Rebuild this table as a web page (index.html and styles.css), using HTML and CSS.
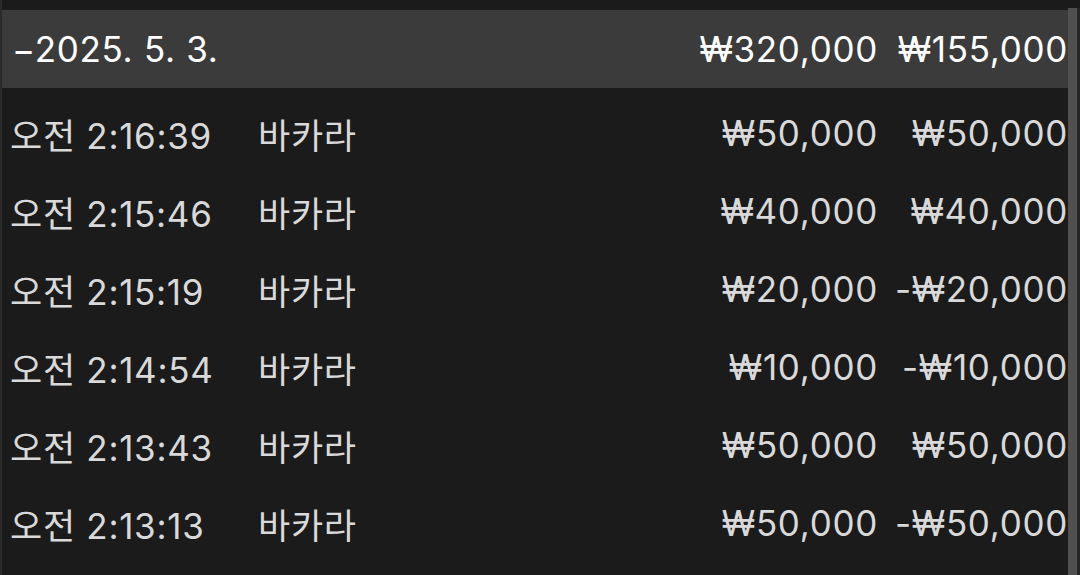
FILE: index.html
```html
<!DOCTYPE html>
<html lang="ko">
<head>
    <meta charset="UTF-8">
    <meta name="viewport" content="width=device-width, initial-scale=1.0">
    <title>게임 기록</title>
    <link rel="stylesheet" href="styles.css">
</head>
<body>
    <div class="screen">
        <section class="list">
            <div class="row dayRow">
                <span class="date">&minus;2025. 5. 3.</span>
                <span class="amount">₩320,000</span>
                <span class="profit">₩155,000</span>
            </div>

            <div class="row">
                <span class="time">오전 2:16:39</span>
                <span class="game">바카라</span>
                <span class="amount">₩50,000</span>
                <span class="profit">₩50,000</span>
            </div>
            <div class="row">
                <span class="time">오전 2:15:46</span>
                <span class="game">바카라</span>
                <span class="amount">₩40,000</span>
                <span class="profit">₩40,000</span>
            </div>
            <div class="row">
                <span class="time">오전 2:15:19</span>
                <span class="game">바카라</span>
                <span class="amount">₩20,000</span>
                <span class="profit">-₩20,000</span>
            </div>
            <div class="row">
                <span class="time">오전 2:14:54</span>
                <span class="game">바카라</span>
                <span class="amount">₩10,000</span>
                <span class="profit">-₩10,000</span>
            </div>
            <div class="row">
                <span class="time">오전 2:13:43</span>
                <span class="game">바카라</span>
                <span class="amount">₩50,000</span>
                <span class="profit">₩50,000</span>
            </div>
            <div class="row">
                <span class="time">오전 2:13:13</span>
                <span class="game">바카라</span>
                <span class="amount">₩50,000</span>
                <span class="profit">-₩50,000</span>
            </div>
        </section>
        <div class="scrollbar">
            <div class="thumb"></div>
        </div>
    </div>
</body>
</html>
```

FILE: styles.css
```css
*{
    margin: 0;
    box-sizing: border-box;
}

body{
    background: #1b1b1b;
    width: 1080px;
    height: 575px;
    overflow: hidden;
    font-family: Inter, "Noto Sans CJK KR", sans-serif;
}

.screen{
    display: flex;
    height: 575px;
    padding-top: 10px;
    border-left: 2px solid #2a2a2a;
}

.list{
    flex: 1;
    min-width: 0;
}

/* scroll track on the right */
.scrollbar{
    width: 12px;
    flex-shrink: 0;
    display: flex;
    margin-top: -2px;
    background: #262626;
}

.thumb{
    width: 9px;
    background: #505050;
}

/* rows */
.row{
    display: grid;
    grid-template-columns: 248px 1fr 200px 190px;
    align-items: center;
    height: 78px;
    padding: 12px 0 0 8px;
    font-size: 35px;
    color: #d9d9d9;
    letter-spacing: 0.7px;
}

.dayRow{
    background: #3b3b3b;
    color: #fff;
    padding-top: 0;
}

.date{
    grid-column: 1 / 3;
    padding-left: 2px;
}

.amount, .profit{
    text-align: right;
}
```
